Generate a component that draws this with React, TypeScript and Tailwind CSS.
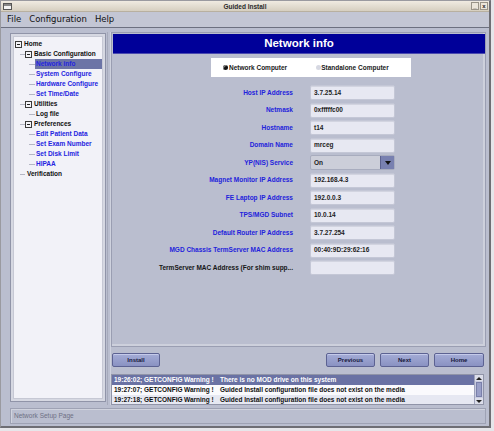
import React from 'react';

const fields: { label: string; value: string; select?: boolean; plain?: boolean }[] = [
  { label: 'Host IP Address', value: '3.7.25.14' },
  { label: 'Netmask', value: '0xfffffc00' },
  { label: 'Hostname', value: 't14' },
  { label: 'Domain Name', value: 'mrceg' },
  { label: 'YP(NIS) Service', value: 'On', select: true },
  { label: 'Magnet Monitor IP Address', value: '192.168.4.3' },
  { label: 'FE Laptop IP Address', value: '192.0.0.3' },
  { label: 'TPS/MGD Subnet', value: '10.0.14' },
  { label: 'Default Router IP Address', value: '3.7.27.254' },
  { label: 'MGD Chassis TermServer MAC Address', value: '00:40:9D:29:62:16' },
  { label: 'TermServer MAC Address (For shim supp...', value: '', plain: true },
];

const logs = [
  { time: '19:26:02; GETCONFIG', msg: 'There is no MOD drive on this system', sel: true },
  { time: '19:27:07; GETCONFIG', msg: 'Guided Install configuration file does not exist on the media' },
  { time: '19:27:18; GETCONFIG', msg: 'Guided Install configuration file does not exist on the media' },
];

function Expander() {
  return (
    <span className="w-[7px] h-[7px] border border-[#3a3a3a] bg-[#f4f4f8] flex items-center justify-center shrink-0">
      <span className="w-[3px] h-px bg-[#222]" />
    </span>
  );
}

function Dash({ w }: { w: number }) {
  return <span className="h-px bg-[#b4b6c4] shrink-0" style={{ width: w }} />;
}

type Node = { text: string; level: number; exp?: boolean; blue?: boolean; sel?: boolean };

const tree: Node[] = [
  { text: 'Home', level: 0, exp: true },
  { text: 'Basic Configuration', level: 1, exp: true },
  { text: 'Network info', level: 2, blue: true, sel: true },
  { text: 'System Configure', level: 2, blue: true },
  { text: 'Hardware Configure', level: 2, blue: true },
  { text: 'Set Time/Date', level: 2, blue: true },
  { text: 'Utilities', level: 1, exp: true },
  { text: 'Log file', level: 2 },
  { text: 'Preferences', level: 1, exp: true },
  { text: 'Edit Patient Data', level: 2, blue: true },
  { text: 'Set Exam Number', level: 2, blue: true },
  { text: 'Set Disk Limit', level: 2, blue: true },
  { text: 'HIPAA', level: 2, blue: true },
  { text: 'Verification', level: 1 },
];

function TreeRow({ n }: { n: Node }) {
  return (
    <div className="flex items-center h-[10px]">
      {n.level === 0 && (
        <>
          <span className="w-px" />
          <Expander />
          <span className="w-[1px]" />
        </>
      )}
      {n.level === 1 && (
        <>
          <span className="w-[6px]" />
          <Dash w={5} />
          {n.exp ? <><Expander /><span className="w-[1px]" /></> : <span className="w-[1px]" />}
        </>
      )}
      {n.level === 2 && (
        <>
          <span className="w-[15px]" />
          <Dash w={6} />
        </>
      )}
      <span
        className={`flex-1 h-[10px] leading-[10px] pl-px text-[6.5px] font-bold whitespace-nowrap ${
          n.sel ? 'bg-[#6c74a6]' : ''
        } ${n.blue ? 'text-[#2424e0]' : 'text-[#101010]'}`}
      >
        {n.text}
      </span>
    </div>
  );
}

function Btn({ label, w }: { label: string; w: string }) {
  return (
    <div
      className={`${w} h-[14px] rounded-[2px] border border-[#5c6292] bg-gradient-to-b from-[#a4acd6] to-[#8a92c2] shadow-[inset_0_1px_0_#c4caea] flex items-center justify-center text-[6px] font-bold text-[#14163a]`}
    >
      {label}
    </div>
  );
}

export default function App() {
  return (
    <div className="w-[494px] h-[431px] bg-[#e6e6ea] font-['Liberation_Sans',Arial,sans-serif] overflow-hidden">
      <div className="w-[491px] h-[428px] flex flex-col bg-[#babecf] border-l border-t border-[#9a9aa0] border-r-2 border-b-2 border-r-[#6e6e74] border-b-[#6e6e74]">
        {/* title bar */}
        <div className="h-[11px] bg-gradient-to-b from-[#f0ebe2] to-[#d6cfc0] border-b border-[#b8b0a0] flex items-center relative">
          <div className="ml-[2px] w-[9px] h-[7px] border border-[#555] bg-[#f4f4f4] flex flex-col">
            <span className="h-[2px] bg-[#888]" />
          </div>
          <span className="absolute left-0 right-0 text-center text-[6.5px] font-bold text-[#2a2a2a] leading-[11px]">
            Guided Install
          </span>
          <div className="ml-auto mr-[1px] flex gap-[1px]">
            <span className="w-[8px] h-[8px] border border-[#9a9488] bg-[#ece6da] text-[6px] leading-[6px] font-bold text-[#222] flex items-end justify-center">_</span>
            <span className="w-[8px] h-[8px] border border-[#9a9488] bg-[#ece6da] text-[6px] leading-[6px] font-bold text-[#222] flex items-center justify-center">x</span>
          </div>
        </div>
        {/* menu bar */}
        <div className="h-[16px] bg-[#c3c6d4] border-b border-[#6c7080] flex items-center pl-[6px] gap-[8px] font-['DejaVu_Sans',sans-serif] text-[8.5px] text-[#111]">
          <span>File</span>
          <span>Configuration</span>
          <span>Help</span>
        </div>
        {/* body */}
        <div className="flex-1 flex flex-col pl-[9px] pr-[2px] pt-[4px]">
          <div className="flex">
            {/* tree */}
            <div className="mt-px w-[96px] h-[369px] border border-[#9094a8] bg-[#d6d8e2] p-[2px]">
              <div className="w-full h-full bg-[#f2f2f8] border border-[#c6c8d4] pt-[2px]">
                {tree.map((n) => (
                  <TreeRow key={n.text} n={n} />
                ))}
              </div>
            </div>
            {/* splitter */}
            <div className="w-[5px] flex justify-center gap-[2px]">
              <span className="w-px bg-[#a6aabb]" />
              <span className="w-px bg-[#cfd2de]" />
            </div>
            {/* right column */}
            <div className="w-[375px] flex flex-col">
              <div className="h-[315px] border border-[#9a9eb2] shadow-[inset_-2px_-2px_0_#cdd0dc] pt-px pl-px">
                <div className="h-[20px] bg-[#000099] border-b border-[#4a4ab0] flex items-center justify-center text-white font-bold text-[11.5px]">
                  Network info
                </div>
                <div className="mt-[4px] ml-[98px] w-[200px] h-[19px] bg-white flex items-center text-[6.5px] font-bold text-[#1a1a1a]">
                  <span className="ml-[12px] w-[5px] h-[5px] rounded-full bg-[#111] shadow-[inset_1px_1px_0_#888]" />
                  <span className="ml-[1px]">Network Computer</span>
                  <span className="ml-[29px] w-[5px] h-[5px] rounded-full bg-[#d6d8e2]" />
                  <span className="ml-[0px]">Standalone Computer</span>
                </div>
                <div className="mt-[8px] flex flex-col gap-[2.5px]">
                  {fields.map((f) => (
                    <div key={f.label} className="flex items-center h-[15px]">
                      <span
                        className={`w-[180px] text-right text-[6.5px] font-bold whitespace-nowrap ${
                          f.plain ? 'text-[#151515]' : 'text-[#2222dc]'
                        }`}
                      >
                        {f.label}
                      </span>
                      {f.select ? (
                        <div className="ml-[17px] w-[85px] h-[15px] rounded-[2px] border border-[#a8acbe] bg-[#ccced9] flex items-center">
                          <span className="flex-1 pl-[3px] text-[6.5px] font-bold text-[#1c1c1c]">{f.value}</span>
                          <span className="w-[14px] h-[13px] bg-[#7880b0] border-l border-[#5c6290] flex items-center justify-center">
                            <span className="w-0 h-0 border-l-[3.5px] border-r-[3.5px] border-t-[4px] border-l-transparent border-r-transparent border-t-[#111]" />
                          </span>
                        </div>
                      ) : (
                        <div className="ml-[17px] w-[85px] h-[15px] rounded-[2px] border border-[#c4c7d6] bg-[#e7e8f2] shadow-[inset_0_1px_0_#d2d4e0] flex items-center pl-[3px] text-[6.5px] font-bold text-[#1c1c1c]">
                          {f.value}
                        </div>
                      )}
                    </div>
                  ))}
                </div>
              </div>
              {/* buttons */}
              <div className="mt-[6px] flex pl-px pr-[2px]">
                <Btn label="Install" w="w-[48px]" />
                <div className="ml-auto flex gap-[5px]">
                  <Btn label="Previous" w="w-[49px]" />
                  <Btn label="Next" w="w-[49px]" />
                  <Btn label="Home" w="w-[50px]" />
                </div>
              </div>
              {/* log */}
              <div className="mt-[7px] mr-[2px] h-[31px] border border-[#9094a8] bg-white flex">
                <div className="flex-1 flex flex-col">
                  {logs.map((l, i) => (
                    <div
                      key={i}
                      className={`h-[10px] flex items-center pl-[2px] text-[6.5px] font-bold whitespace-nowrap ${
                        l.sel ? 'bg-[#6a72a4] text-white' : i === 1 ? 'bg-[#fafafd] text-[#111]' : 'bg-[#e6e8f2] text-[#111]'
                      }`}
                    >
                      <span className="w-[70px]">{l.time}</span>
                      <span className="w-[36px]">Warning !</span>
                      <span>{l.msg}</span>
                    </div>
                  ))}
                </div>
                <div className="w-[9px] bg-[#c9cce0] border-l border-[#a0a4bc] flex flex-col">
                  <div className="h-[6px] flex items-center justify-center bg-[#dcdeea]">
                    <span className="w-0 h-0 border-l-[3px] border-r-[3px] border-b-[3px] border-l-transparent border-r-transparent border-b-[#222]" />
                  </div>
                  <div className="flex-1 mx-px my-px bg-[#9aa0c8] border border-[#7a80aa]" />
                  <div className="h-[6px] flex items-center justify-center bg-[#dcdeea]">
                    <span className="w-0 h-0 border-l-[3px] border-r-[3px] border-t-[3px] border-l-transparent border-r-transparent border-t-[#222]" />
                  </div>
                </div>
              </div>
            </div>
          </div>
          {/* status bar */}
          <div className="mt-[3px] mr-[1px] h-[16px] border border-[#9ea2b4] shadow-[inset_1px_1px_0_#d0d3de] flex items-center pl-[3px] text-[6.5px] text-[#6e7084]">
            Network Setup Page
          </div>
        </div>
      </div>
    </div>
  );
}
